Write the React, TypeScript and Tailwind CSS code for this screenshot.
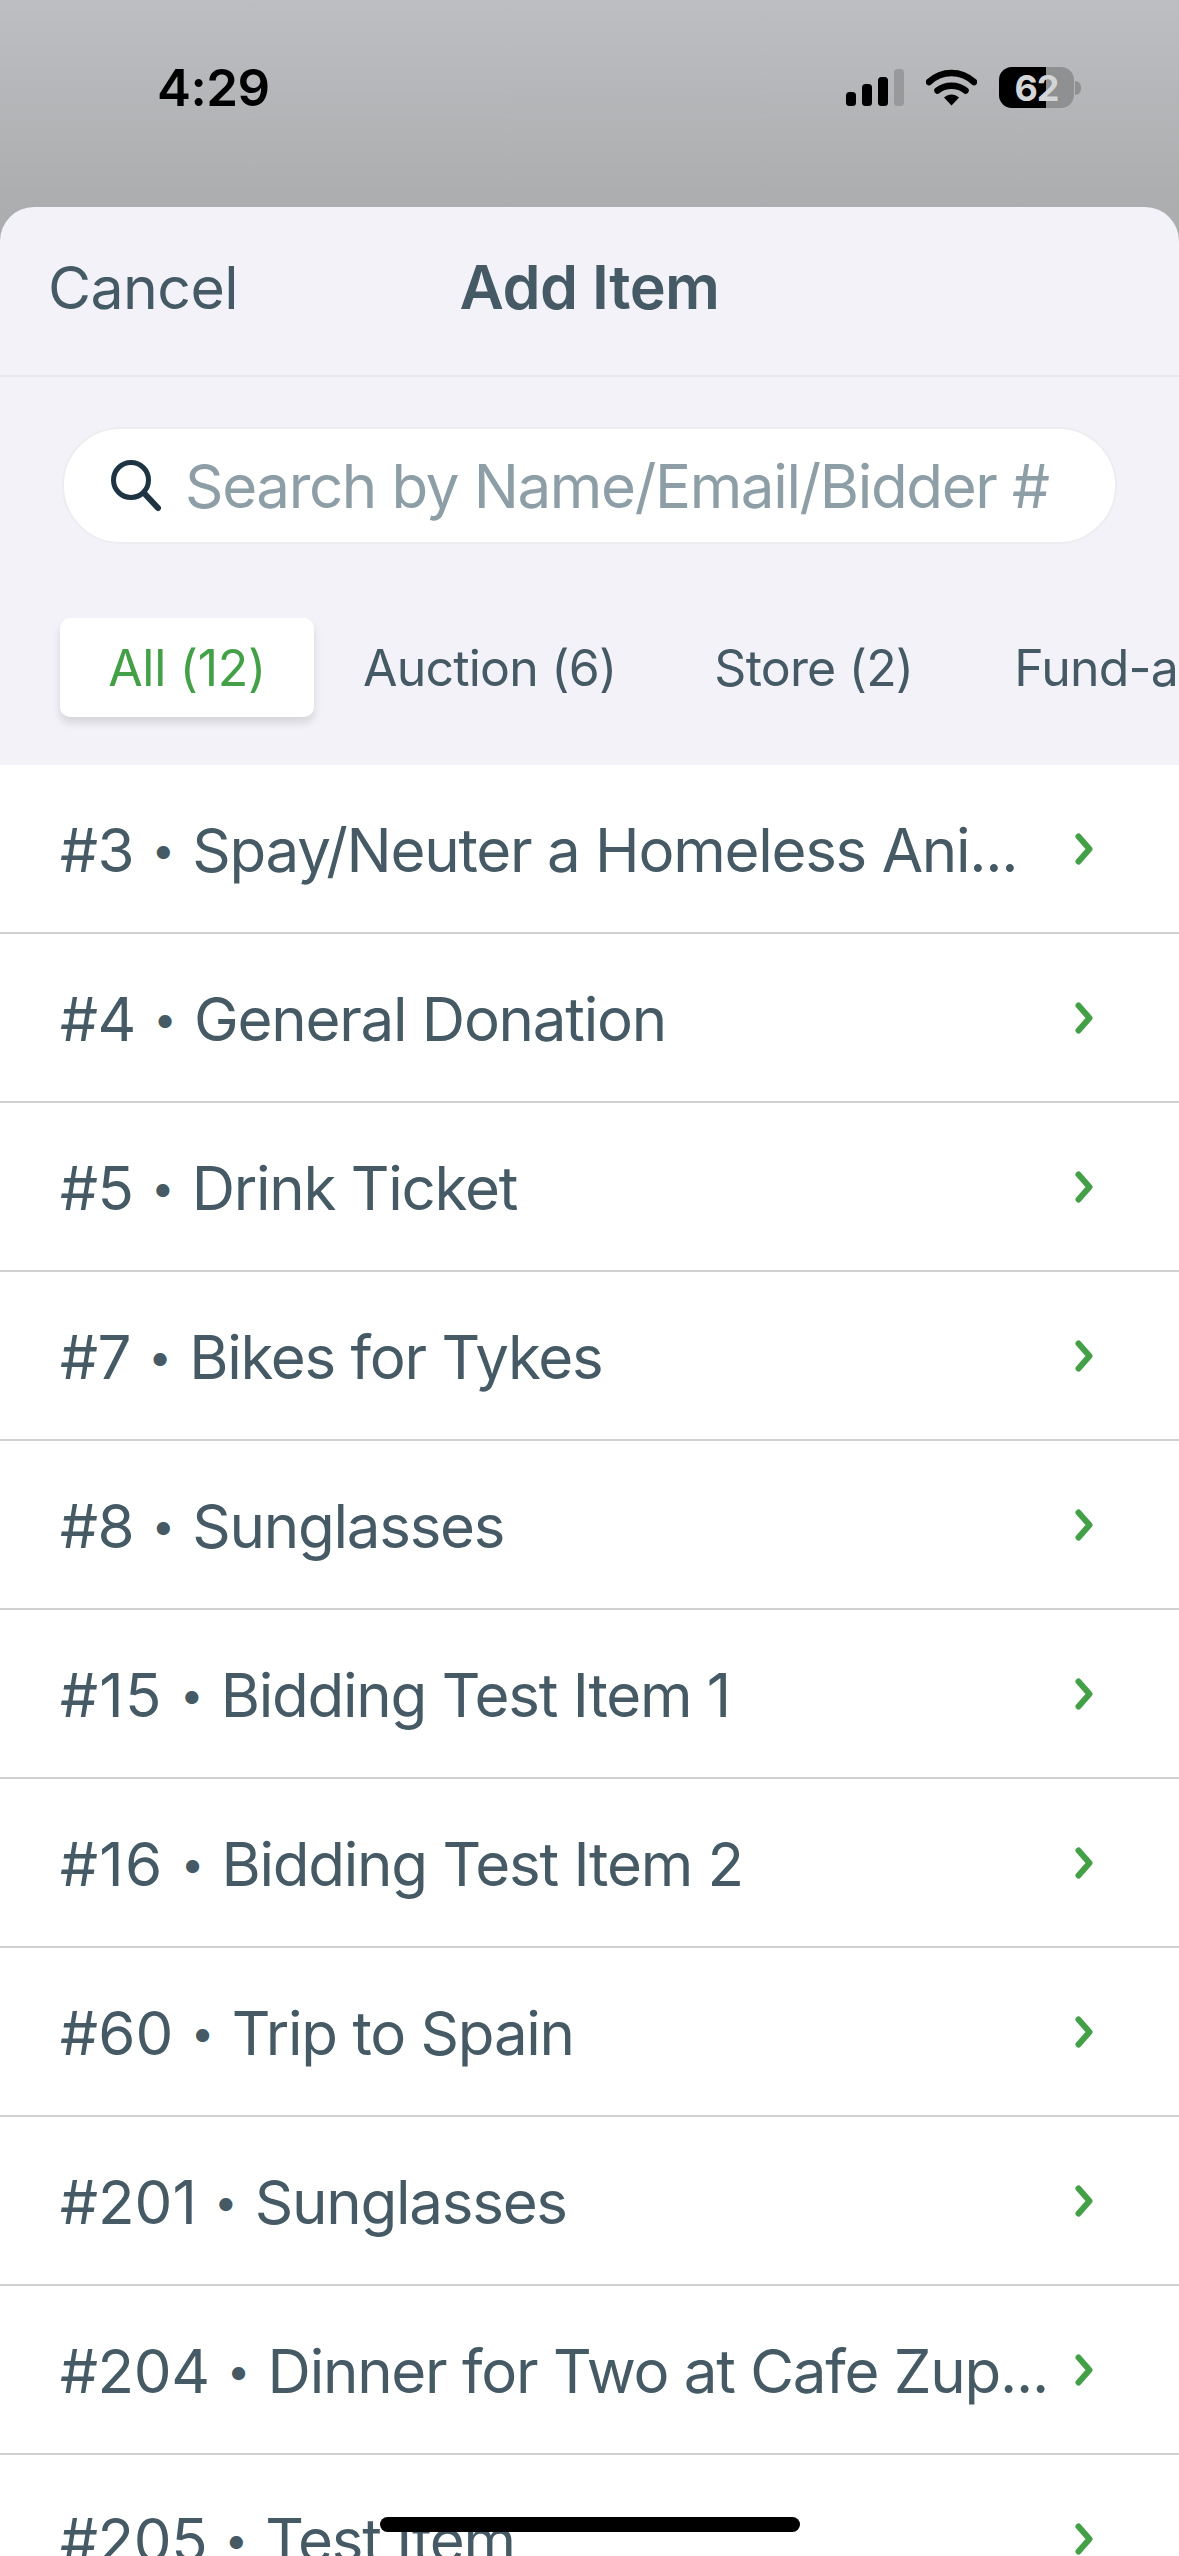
import React from "react";

const items = [
  ["#3", "Spay/Neuter a Homeless Ani...", "tracking-[-0.4px]"],
  ["#4", "General Donation", "tracking-[-0.4px]"],
  ["#5", "Drink Ticket", "tracking-[-0.4px]"],
  ["#7", "Bikes for Tykes", "tracking-[-0.4px]"],
  ["#8", "Sunglasses", "tracking-[-0.4px]"],
  ["#15", "Bidding Test Item 1", "tracking-[1.3px]"],
  ["#16", "Bidding Test Item 2", "tracking-[1.3px]"],
  ["#60", "Trip to Spain", "tracking-[0.2px]"],
  ["#201", "Sunglasses", "tracking-[0px]"],
  ["#204", "Dinner for Two at Cafe Zup...", "tracking-[-0.4px]"],
  ["#205", "Test Item", "tracking-[-0.4px]"],
];

function Chevron() {
  return (
    <svg width="18" height="32" viewBox="0 0 18 32" className="shrink-0" fill="none">
      <path d="M3.5 3.5 L14.5 16 L3.5 28.5" stroke="#43a047" strokeWidth="6" strokeLinecap="round" strokeLinejoin="round" />
    </svg>
  );
}

function StatusIcons() {
  return (
    <div className="flex items-center">
      <svg width="58" height="37" viewBox="0 0 58 37" className="mr-[22px]">
        <rect x="0" y="23" width="10" height="14" rx="3.5" fill="#000" />
        <rect x="16" y="15" width="10" height="22" rx="3.5" fill="#000" />
        <rect x="32" y="8" width="10" height="29" rx="3.5" fill="#000" />
        <rect x="48" y="0" width="10" height="37" rx="3.5" fill="#98999b" />
      </svg>
      <svg width="51" height="37" viewBox="0 0 51 37" className="mr-[22px]" fill="none">
        <path d="M3 13 C16 1 35 1 48 13" stroke="#000" strokeWidth="6.5" strokeLinecap="round" />
        <path d="M11.5 21.5 C19 15 32 15 39.5 21.5" stroke="#000" strokeWidth="6.5" strokeLinecap="round" />
        <path d="M18 28.5 L25.5 36.5 L33 28.5 C28.5 24.5 22.5 24.5 18 28.5 Z" fill="#000" />
      </svg>
      <div className="relative flex h-[41px] w-[75px] items-center justify-center overflow-hidden rounded-[13px] bg-[#8f9092]">
        <div className="absolute inset-y-0 left-0 w-[47px] bg-black" />
        <span className="relative text-[36px] font-bold leading-none tracking-[-1px] text-[#d4d5d7]">62</span>
      </div>
      <div className="ml-[1px] h-[14px] w-[6px] rounded-r-full bg-[#8f9092]" />
    </div>
  );
}

export default function App() {
  return (
    <div className="relative h-[2556px] w-[1179px] overflow-hidden bg-[#acadaf] font-['Inter',sans-serif]">
      <div className="flex h-[207px] items-start justify-between bg-gradient-to-b from-[#bdbec1] to-[#acadaf] pl-[157px] pr-[98px] pt-[67px]">
        <span className="text-[51px] font-semibold leading-[41px] tracking-[-0.5px] text-black">4:29</span>
        <StatusIcons />
      </div>

      <div className="overflow-hidden rounded-t-[34px] bg-[#f2f2f8]">
        <div className="grid h-[170px] grid-cols-3 items-center border-b-2 border-[#e7e7ee] pb-[8px]">
          <span className="pl-[48px] text-[59px] leading-none tracking-[-0.6px] text-[#455a64]">Cancel</span>
          <span className="whitespace-nowrap text-center text-[61px] font-semibold leading-none tracking-[-0.6px] text-[#455a64]">Add Item</span>
        </div>

        <div className="pb-[74px] pl-[62px] pt-[50px]">
          <div className="flex h-[117px] w-[1055px] items-center rounded-full border-2 border-[#ecedf1] bg-white pl-[47px]">
            <svg width="52" height="54" viewBox="0 0 52 54" fill="none" className="shrink-0">
              <circle cx="20" cy="21" r="17.5" stroke="#1f3443" strokeWidth="5" />
              <path d="M33 34 L47 49" stroke="#1f3443" strokeWidth="6" strokeLinecap="round" />
            </svg>
            <span className="ml-[22px] whitespace-nowrap text-[60px] leading-none tracking-[-1.35px] text-[#8e9ea6]">
              Search by Name/Email/Bidder #
            </span>
          </div>
        </div>

        <div className="flex h-[147px] items-start overflow-hidden pl-[60px]">
          <div className="flex h-[99px] w-[254px] shrink-0 items-center justify-center whitespace-nowrap rounded-[10px] bg-white text-[50px] leading-none tracking-[-0.3px] text-[#43a047] shadow-[0_6px_8px_rgba(0,0,0,0.12)]">
            All (12)
          </div>
          <div className="flex h-[99px] shrink-0 items-center whitespace-nowrap px-[49px] text-[50px] leading-none tracking-[-0.8px] text-[#455a64]">
            Auction (6)
          </div>
          <div className="flex h-[99px] shrink-0 items-center whitespace-nowrap px-[49px] text-[50px] leading-none tracking-[-0.8px] text-[#455a64]">
            Store (2)
          </div>
          <div className="ml-[3px] flex h-[99px] shrink-0 items-center whitespace-nowrap px-[49px] text-[50px] leading-none tracking-[-0.8px] text-[#455a64]">
            Fund-a-Need (3)
          </div>
        </div>
      </div>

      <div className="bg-white">
        {items.map(([n, t, cls]) => (
          <div key={n} className="flex h-[169px] items-center justify-between border-b-2 border-[#d0d1d3] pl-[60px] pr-[86px]">
            <span className="flex items-center whitespace-nowrap pt-[3px] text-[60px] leading-none text-[#455a64]">
              <span className={cls}>{n}</span>
              <span className="w-[58px] text-center text-[42px]">•</span>
              <span className="tracking-[-1.25px]">{t}</span>
            </span>
            <Chevron />
          </div>
        ))}
      </div>

      <div className="absolute bottom-[24px] left-[380px] h-[15px] w-[420px] rounded-full bg-black" />
    </div>
  );
}
